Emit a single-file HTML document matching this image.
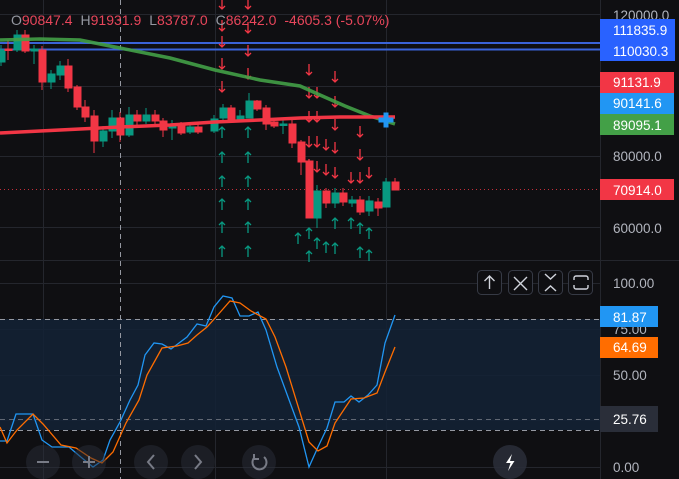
<!DOCTYPE html>
<html><head><meta charset="utf-8"><style>
html,body{margin:0;padding:0;background:#0f0f12;width:679px;height:479px;overflow:hidden;font-family:"Liberation Sans",sans-serif}
svg{display:block}
.ax{fill:#b2b5be;font-size:13.5px;font-family:"Liberation Sans",sans-serif}
.lb{fill:#fff;font-size:13.5px;font-family:"Liberation Sans",sans-serif}
</style></head><body>
<svg width="679" height="479" viewBox="0 0 679 479" xmlns="http://www.w3.org/2000/svg" xmlns:xlink="http://www.w3.org/1999/xlink">
<defs>
<path id="d" d="M0,-6 V5 M-3,2 L0,5 L3,2" stroke="#f23645" stroke-width="1.3" fill="none"/>
<path id="u" d="M0,6 V-5 M-3,-2 L0,-5 L3,-2" stroke="#089981" stroke-width="1.3" fill="none"/>
</defs>
<rect width="679" height="479" fill="#0f0f12"/>
<g stroke="#24262d" stroke-width="1">
<line x1="43.5" y1="0" x2="43.5" y2="479"/><line x1="215.5" y1="0" x2="215.5" y2="479"/><line x1="386.5" y1="0" x2="386.5" y2="479"/>
<line x1="0" y1="14.5" x2="600" y2="14.5"/><line x1="0" y1="86.5" x2="600" y2="86.5"/><line x1="0" y1="156.5" x2="600" y2="156.5"/><line x1="0" y1="227.5" x2="600" y2="227.5"/>
<line x1="0" y1="260.5" x2="679" y2="260.5"/>
<line x1="0" y1="283.5" x2="600" y2="283.5"/><line x1="0" y1="329.5" x2="600" y2="329.5"/><line x1="0" y1="375.5" x2="600" y2="375.5"/><line x1="0" y1="420.5" x2="600" y2="420.5"/><line x1="0" y1="467.5" x2="600" y2="467.5"/>
<line x1="600.5" y1="0" x2="600.5" y2="479"/>
</g>
<rect x="0" y="319" width="600" height="111" fill="#132236" opacity="0.85"/>
<g stroke="#9598a1" stroke-width="1" stroke-dasharray="5,4">
<line x1="0" y1="319.5" x2="600" y2="319.5"/><line x1="0" y1="430.5" x2="600" y2="430.5"/>
</g>
<line x1="0" y1="419.5" x2="600" y2="419.5" stroke="#9598a1" stroke-dasharray="5,4" opacity="0.6"/>
<line x1="120.5" y1="0" x2="120.5" y2="479" stroke="#9598a1" stroke-dasharray="5,4"/>
<line x1="0" y1="189.5" x2="600" y2="189.5" stroke="#f23645" stroke-dasharray="1,3" opacity="0.8"/>
<line x1="0" y1="43" x2="600" y2="43" stroke="#3a63d8" stroke-width="2"/>
<line x1="0" y1="49.5" x2="600" y2="49.5" stroke="#3a63d8" stroke-width="2"/>
<!-- arrows -->
<g>
<use xlink:href="#d" x="222" y="4"/><use xlink:href="#d" x="222" y="26"/><use xlink:href="#d" x="222" y="42"/><use xlink:href="#d" x="222" y="64"/><use xlink:href="#d" x="222" y="87"/>
<use xlink:href="#d" x="248" y="4"/><use xlink:href="#d" x="248" y="28"/><use xlink:href="#d" x="248" y="51"/><use xlink:href="#d" x="248" y="74"/>
<use xlink:href="#d" x="309" y="70"/><use xlink:href="#d" x="309" y="93"/><use xlink:href="#d" x="309" y="117"/><use xlink:href="#d" x="309" y="142"/><use xlink:href="#d" x="309" y="165"/>
<use xlink:href="#d" x="317" y="93"/><use xlink:href="#d" x="317" y="117"/><use xlink:href="#d" x="317" y="142"/><use xlink:href="#d" x="317" y="167"/>
<use xlink:href="#d" x="326" y="145"/><use xlink:href="#d" x="326" y="170"/>
<use xlink:href="#d" x="335" y="77"/><use xlink:href="#d" x="335" y="102"/><use xlink:href="#d" x="335" y="125"/><use xlink:href="#d" x="335" y="148"/><use xlink:href="#d" x="335" y="173"/>
<use xlink:href="#d" x="351" y="178"/>
<use xlink:href="#d" x="360" y="132"/><use xlink:href="#d" x="360" y="155"/><use xlink:href="#d" x="360" y="178"/>
<use xlink:href="#d" x="369" y="173"/>
<use xlink:href="#u" x="222" y="132"/><use xlink:href="#u" x="222" y="157"/><use xlink:href="#u" x="222" y="181"/><use xlink:href="#u" x="222" y="204"/><use xlink:href="#u" x="222" y="227"/><use xlink:href="#u" x="222" y="251"/>
<use xlink:href="#u" x="248" y="132"/><use xlink:href="#u" x="248" y="157"/><use xlink:href="#u" x="248" y="181"/><use xlink:href="#u" x="248" y="204"/><use xlink:href="#u" x="248" y="227"/><use xlink:href="#u" x="248" y="251"/>
<use xlink:href="#u" x="309" y="233"/><use xlink:href="#u" x="309" y="256"/><use xlink:href="#u" x="317" y="243"/><use xlink:href="#u" x="326" y="247"/>
<use xlink:href="#u" x="335" y="223"/><use xlink:href="#u" x="335" y="248"/><use xlink:href="#u" x="351" y="223"/>
<use xlink:href="#u" x="360" y="228"/><use xlink:href="#u" x="360" y="252"/><use xlink:href="#u" x="369" y="233"/><use xlink:href="#u" x="369" y="255"/>
<use xlink:href="#u" x="298" y="238"/>
</g>
<g stroke-width="1">
<g fill="#089981" stroke="#089981">
<line x1="1" y1="45" x2="1" y2="66"/><rect x="-2" y="50" width="7" height="12"/>
<line x1="17" y1="30" x2="17" y2="52"/><rect x="14" y="35" width="7" height="15"/>
<line x1="34" y1="45" x2="34" y2="64"/><rect x="31" y="49" width="7" height="2"/>
<line x1="51" y1="70" x2="51" y2="89"/><rect x="48" y="74" width="7" height="8"/>
<line x1="60" y1="61" x2="60" y2="80"/><rect x="57" y="66" width="7" height="9"/>
<line x1="103" y1="126" x2="103" y2="147"/><rect x="100" y="131" width="7" height="10"/>
<line x1="112" y1="110" x2="112" y2="138"/><rect x="109" y="118" width="7" height="13"/>
<line x1="129" y1="107" x2="129" y2="137"/><rect x="126" y="115" width="7" height="20"/>
<line x1="146" y1="108" x2="146" y2="124"/><rect x="143" y="115" width="7" height="6"/>
<line x1="172" y1="120" x2="172" y2="140"/><rect x="169" y="126" width="7" height="2"/>
<line x1="190" y1="122" x2="190" y2="134"/><rect x="187" y="127" width="7" height="5"/>
<line x1="214" y1="115" x2="214" y2="133"/><rect x="211" y="119" width="7" height="12"/>
<line x1="223" y1="104" x2="223" y2="120"/><rect x="220" y="108" width="7" height="10"/>
<line x1="240" y1="110" x2="240" y2="121"/><rect x="237" y="116" width="7" height="3"/>
<line x1="249" y1="93" x2="249" y2="118"/><rect x="246" y="101" width="7" height="17"/>
<line x1="283" y1="120" x2="283" y2="134"/><rect x="280" y="124" width="7" height="1.5"/>
<line x1="317" y1="185" x2="317" y2="228"/><rect x="314" y="191" width="7" height="27"/>
<line x1="335" y1="188" x2="335" y2="208"/><rect x="332" y="193" width="7" height="10"/>
<line x1="352" y1="196" x2="352" y2="207"/><rect x="349" y="200" width="7" height="3"/>
<line x1="369" y1="196" x2="369" y2="216"/><rect x="366" y="201" width="7" height="10"/>
<line x1="386" y1="178" x2="386" y2="207"/><rect x="383" y="182" width="7" height="25"/>
</g>
<g fill="#f23645" stroke="#f23645">
<line x1="8" y1="40" x2="8" y2="60"/><rect x="5" y="49" width="7" height="1.5"/>
<line x1="25" y1="30" x2="25" y2="53"/><rect x="22" y="35" width="7" height="16"/>
<line x1="42" y1="46" x2="42" y2="90"/><rect x="39" y="50" width="7" height="32"/>
<line x1="68" y1="59" x2="68" y2="92"/><rect x="65" y="66" width="7" height="22"/>
<line x1="77" y1="85" x2="77" y2="110"/><rect x="74" y="87" width="7" height="20"/>
<line x1="85" y1="100" x2="85" y2="122"/><rect x="82" y="107" width="7" height="10"/>
<line x1="94" y1="110" x2="94" y2="153"/><rect x="91" y="116" width="7" height="25"/>
<line x1="120" y1="112" x2="120" y2="142"/><rect x="117" y="118" width="7" height="17"/>
<line x1="137" y1="110" x2="137" y2="126"/><rect x="134" y="115" width="7" height="6"/>
<line x1="155" y1="110" x2="155" y2="124"/><rect x="152" y="115" width="7" height="6"/>
<line x1="163" y1="118" x2="163" y2="137"/><rect x="160" y="121" width="7" height="9"/>
<line x1="181" y1="122" x2="181" y2="135"/><rect x="178" y="126" width="7" height="7"/>
<line x1="198" y1="123" x2="198" y2="134"/><rect x="195" y="127" width="7" height="5"/>
<line x1="231" y1="105" x2="231" y2="122"/><rect x="228" y="108" width="7" height="12"/>
<line x1="257" y1="100" x2="257" y2="111"/><rect x="254" y="101" width="7" height="8"/>
<line x1="266" y1="105" x2="266" y2="130"/><rect x="263" y="108" width="7" height="16"/>
<line x1="274" y1="118" x2="274" y2="128"/><rect x="271" y="122" width="7" height="4"/>
<line x1="292" y1="120" x2="292" y2="148"/><rect x="289" y="124" width="7" height="19"/>
<line x1="301" y1="140" x2="301" y2="175"/><rect x="298" y="142" width="7" height="20"/>
<line x1="309" y1="160" x2="309" y2="218"/><rect x="306" y="161" width="7" height="57"/>
<line x1="326" y1="188" x2="326" y2="208"/><rect x="323" y="191" width="7" height="12"/>
<line x1="343" y1="188" x2="343" y2="206"/><rect x="340" y="193" width="7" height="9"/>
<line x1="360" y1="196" x2="360" y2="215"/><rect x="357" y="200" width="7" height="12"/>
<line x1="378" y1="198" x2="378" y2="216"/><rect x="375" y="202" width="7" height="6"/>
<line x1="395" y1="178" x2="395" y2="190"/><rect x="392" y="182" width="7" height="8"/>
</g>
</g>
<path d="M0,40 L40,39 L80,40 L120,48 L170,58 L215,70 L260,80 L300,86 L320,95 L345,106 L370,116 L395,124" fill="none" stroke="#43a047" stroke-width="3.5" opacity="0.9"/>
<path d="M0,133 L60,130 L120,127 L170,125 L215,122 L260,120 L300,118 L340,117 L395,117" fill="none" stroke="#f23645" stroke-width="3.5"/>
<path d="M378.5,120 h15 M386,112.5 v15" stroke="#2196f3" stroke-width="5" fill="none"/>
<polyline fill="none" stroke="#2196f3" stroke-width="1.3" points="0,441 7,441 16,414 33,414 42,440 52,447 69,447 82,458 93,467 103,460 110,440 120,422 130,400 138,385 145,355 154,343 162,344 171,349 187,337 197,324 206,326 214,307 223,296 232,298 240,316 249,316 258,312 266,330 277,367 299,427 309,467 318,447 327,428 335,402 344,402 351,396 359,402 368,395 377,385 385,343 395,315"/>
<polyline fill="none" stroke="#ff6d00" stroke-width="1.3" points="0,427 7,443 17,430 33,414 43,424 61,445 76,448 91,458 102,463 113,452 126,423 139,400 147,375 162,348 177,346 188,343 197,335 207,327 216,317 230,301 240,303 251,311 266,319 275,337 286,367 309,442 318,451 327,446 335,423 351,399 364,398 377,393 385,372 395,347"/>
<text y="25" font-size="14" font-family="Liberation Sans, sans-serif"><tspan x="11" fill="#9598a1">O</tspan><tspan fill="#e8465b">90847.4</tspan><tspan fill="#9598a1" dx="8">H</tspan><tspan fill="#e8465b">91931.9</tspan><tspan fill="#9598a1" dx="8">L</tspan><tspan fill="#e8465b">83787.0</tspan><tspan fill="#9598a1" dx="8">C</tspan><tspan fill="#e8465b">86242.0</tspan><tspan fill="#e8465b" dx="8">-4605.3 (-5.07%)</tspan></text>
<g class="ax">
<text x="613" y="20">120000.0</text>
<text x="613" y="161">80000.0</text>
<text x="613" y="233">60000.0</text>
<text x="613" y="288">100.00</text>
<text x="613" y="334">75.00</text>
<text x="613" y="380">50.00</text>
<text x="613" y="472">0.00</text>
</g>
<rect x="600" y="19" width="75" height="42" fill="#2962ff"/>
<text class="lb" x="613" y="35">111835.9</text><text class="lb" x="613" y="56">110030.3</text>
<rect x="600" y="72" width="74" height="21" fill="#f23645"/><text class="lb" x="613" y="87">91131.9</text>
<rect x="600" y="93" width="74" height="21" fill="#2196f3"/><text class="lb" x="613" y="108">90141.6</text>
<rect x="600" y="114" width="74" height="21" fill="#43a047"/><text class="lb" x="613" y="130">89095.1</text>
<rect x="600" y="179" width="74" height="21" fill="#f23645"/><text class="lb" x="613" y="195">70914.0</text>
<rect x="600" y="306" width="58" height="21" fill="#2196f3"/><text class="lb" x="613" y="322">81.87</text>
<rect x="600" y="337" width="58" height="21" fill="#ff6d00"/><text class="lb" x="613" y="352">64.69</text>
<rect x="600" y="406" width="58" height="26" fill="#2a2e39"/><text class="lb" x="613" y="424">25.76</text>
<g fill="#0f0f12" stroke="#363a45" stroke-width="1">
<rect x="477.5" y="270.5" width="24" height="24" rx="4"/><rect x="508.5" y="270.5" width="24" height="24" rx="4"/><rect x="538.5" y="270.5" width="24" height="24" rx="4"/><rect x="568.5" y="270.5" width="24" height="24" rx="4"/>
</g>
<g stroke="#d1d4dc" stroke-width="1.4" fill="none">
<path d="M489.5,289 V276 M484.5,281 L489.5,276 L494.5,281"/>
<path d="M514,277 L527,290 M527,277 L514,290"/>
<path d="M545,274 L550.5,279 L556,274 M545,291 L550.5,286 L556,291"/>
<path d="M576,276 h10 a2,2 0 0 1 2,2 v2 M588,285 v2 a2,2 0 0 1 -2,2 h-10 a2,2 0 0 1 -2,-2 v-2 M574,280 v-2 a2,2 0 0 1 2,-2"/>
</g>
<g fill="#2a2e39" opacity="0.5">
<circle cx="43" cy="462" r="17"/><circle cx="89" cy="462" r="17"/><circle cx="151" cy="462" r="17"/><circle cx="198" cy="462" r="17"/><circle cx="259" cy="462" r="17"/>
</g>
<circle cx="510" cy="462" r="17" fill="#2a2e39" opacity="0.85"/>
<g stroke="#787b86" stroke-width="2" fill="none">
<path d="M37,462 h12"/><path d="M83,462 h12 M89,456 v12"/>
<path d="M154,455 L148,462 L154,469"/><path d="M195,455 L201,462 L195,469"/>
<path d="M264,457 A7,7 0 1 1 254,458 M254,454 v5 h5"/>
</g>
<path d="M512,454 L506,463 H510.5 L508,471 L514.5,461 H510 Z" fill="#fff"/>
</svg>
</body></html>
